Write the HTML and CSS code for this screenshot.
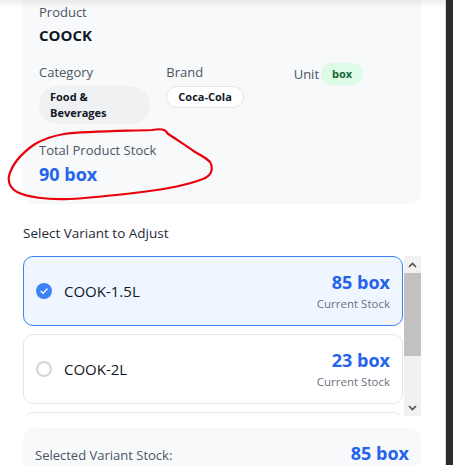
FILE: index.html
```html
<!DOCTYPE html>
<html lang="en">
<head>
<meta charset="utf-8">
<title>Adjust Stock</title>
<link rel="stylesheet" href="styles.css">
</head>
<body>
<div class="screen">
  <div class="modal">
    <div class="modal-shadow"></div>
    <section class="product-card">
      <div class="field">
        <div class="label">Product</div>
        <div class="product-name">COOCK</div>
      </div>
      <div class="meta-grid">
        <div class="meta">
          <div class="label">Category</div>
          <span class="chip chip-gray">Food &amp; Beverages</span>
        </div>
        <div class="meta">
          <div class="label">Brand</div>
          <span class="chip chip-outline">Coca-Cola</span>
        </div>
        <div class="meta">
          <span class="label">Unit</span><span class="chip chip-green">box</span>
        </div>
      </div>
      <div class="total">
        <div class="label">Total Product Stock</div>
        <div class="total-value">90 box</div>
        <svg class="annotation" width="212" height="80" viewBox="0 0 212 80" fill="none">
          <path d="M162 2 C164 3 165 4 165 5 C175 12 185 18 193 24 C202 29 208 32 209 36 C211 42 209 48 201 51 C185 57 165 61 140 64 C115 67 90 70 67 71 C45 72 25 69 15 64 C8 60 6 54 7 48 C10 36 20 25 33 16 C42 11 50 8 62 6 C85 3 120 3 150 2 C156 1 160 1 162 2 Z" stroke="#e8000b" stroke-width="2.2" stroke-linejoin="round"/>
        </svg>
      </div>
    </section>

    <div class="section-title">Select Variant to Adjust</div>

    <div class="variant-area">
      <div class="variant-list">
        <div class="variant selected">
          <span class="check">
            <svg width="16" height="16" viewBox="0 0 16 16"><circle cx="8" cy="8" r="8" fill="#3b82f6"/><path d="M5 8.2 L7.1 10.2 L11 6" stroke="#fff" stroke-width="1.3" fill="none" stroke-linecap="round" stroke-linejoin="round"/></svg>
          </span>
          <span class="variant-name">COOK-1.5L</span>
          <div class="variant-stock">
            <div class="stock-value">85 box</div>
            <div class="stock-label">Current Stock</div>
          </div>
        </div>
        <div class="variant">
          <span class="radio"></span>
          <span class="variant-name">COOK-2L</span>
          <div class="variant-stock">
            <div class="stock-value">23 box</div>
            <div class="stock-label">Current Stock</div>
          </div>
        </div>
        <div class="variant variant-next" aria-hidden="true"></div>
      </div>
      <div class="scrollbar">
        <div class="sb-btn">
          <svg width="9" height="6" viewBox="0 0 9 6"><path d="M1 5 L4.5 1.5 L8 5" stroke="#505050" stroke-width="1.6" fill="none"/></svg>
        </div>
        <div class="sb-thumb"></div>
        <div class="sb-track"></div>
        <div class="sb-btn">
          <svg width="9" height="6" viewBox="0 0 9 6"><path d="M1 1 L4.5 4.5 L8 1" stroke="#505050" stroke-width="1.6" fill="none"/></svg>
        </div>
      </div>
    </div>

    <section class="summary">
      <span class="summary-label">Selected Variant Stock:</span>
      <span class="summary-value">85 box</span>
    </section>
  </div>
  <div class="backdrop"></div>
</div>
</body>
</html>
```
FILE: styles.css
```css
* { box-sizing: border-box; }
html, body { margin: 0; padding: 0; }
body {
  font-family: "Open Sans", "Noto Sans", "Liberation Sans", sans-serif;
  color: #111827;
  background: #fff;
  overflow: hidden;
}
.screen {
  display: flex;
  height: 465px;
  overflow: hidden;
}
.modal {
  position: relative;
  width: 446px;
  flex: none;
  background: #fff;
  padding: 0 24px 0 23px;
  border-right: 1px solid #d9d9d9;
}
.modal-shadow {
  position: absolute;
  left: 0; right: 0; top: 0;
  height: 8px;
  background: linear-gradient(to bottom, rgba(0,0,0,0.07), rgba(0,0,0,0));
  z-index: 5;
}
.backdrop {
  flex: 1;
  background: #2c2c2c;
}
.product-card {
  background: #f8f9fb;
  border-radius: 0 0 12px 12px;
  padding: 2px 16px 18px;
}
.label {
  font-size: 13px;
  line-height: 20px;
  color: #4b5563;
}
.product-name {
  margin-top: 2px;
  font-size: 15px;
  font-weight: 700;
  line-height: 22px;
  color: #111827;
}
.meta-grid {
  display: grid;
  grid-template-columns: repeat(3, 1fr);
  gap: 16px;
  margin-top: 16px;
}
.meta .label { display: block; }
.meta span.label { display: inline; }
.chip {
  display: inline-block;
  font-size: 11px;
  font-weight: 700;
  line-height: 16px;
  border-radius: 9999px;
  padding: 3px 11px;
  margin-top: 4px;
  color: #111827;
}
.chip-gray { background: #f0f1f3; }
.chip-outline { background: #fff; border: 1px solid #e2e4e8; padding: 2px 11px; }
.chip-green {
  background: #dcfce7;
  color: #166534;
  margin-top: 0;
  margin-left: 2px;
  vertical-align: 1px;
}
.total {
  position: relative;
  margin-top: 16px;
}
.total-value {
  margin-top: 2px;
  font-size: 18px;
  font-weight: 700;
  line-height: 24px;
  color: #2563eb;
}
.annotation {
  position: absolute;
  left: -37px;
  top: -12px;
  pointer-events: none;
}
.section-title {
  margin-top: 19px;
  font-size: 13.5px;
  line-height: 20px;
  color: #1f2937;
}
.variant-area {
  display: flex;
  height: 160px;
  margin-top: 13px;
}
.variant-list {
  flex: 1;
  overflow: hidden;
  display: flex;
  flex-direction: column;
  gap: 8px;
  padding-right: 1px;
}
.variant {
  flex: none;
  display: flex;
  align-items: center;
  height: 70px;
  padding: 0 12px;
  border: 1px solid #e5e7eb;
  border-radius: 10px;
  background: #fff;
}
.variant.selected {
  border-color: #3b82f6;
  background: #eff6ff;
}
.check { display: flex; width: 16px; height: 16px; }
.radio {
  width: 16px; height: 16px;
  border: 2px solid #d1d5db;
  border-radius: 50%;
}
.variant-name {
  margin-left: 12px;
  font-size: 15px;
  color: #111827;
  flex: 1;
}
.variant-stock { text-align: right; }
.stock-value {
  font-size: 18px;
  font-weight: 700;
  line-height: 24px;
  color: #2563eb;
}
.stock-label {
  margin-top: 2px;
  font-size: 11.5px;
  line-height: 16px;
  color: #6b7280;
}
.scrollbar {
  width: 17px;
  flex: none;
  display: flex;
  flex-direction: column;
  background: #f1f1f1;
}
.sb-btn {
  height: 17px;
  display: flex;
  align-items: center;
  justify-content: center;
}
.sb-thumb {
  height: 83px;
  background: #c1c1c1;
}
.sb-track { flex: 1; }
.summary {
  margin-top: 12px;
  background: #f8f9fb;
  border-radius: 12px 12px 0 0;
  height: 40px;
  display: flex;
  justify-content: space-between;
  align-items: flex-start;
  padding: 14px 12px 0;
}
.summary-label {
  font-size: 13px;
  line-height: 22px;
  padding-top: 2px;
  color: #4b5563;
}
.summary-value {
  font-size: 18px;
  font-weight: 700;
  line-height: 22px;
  color: #2563eb;
}
```
